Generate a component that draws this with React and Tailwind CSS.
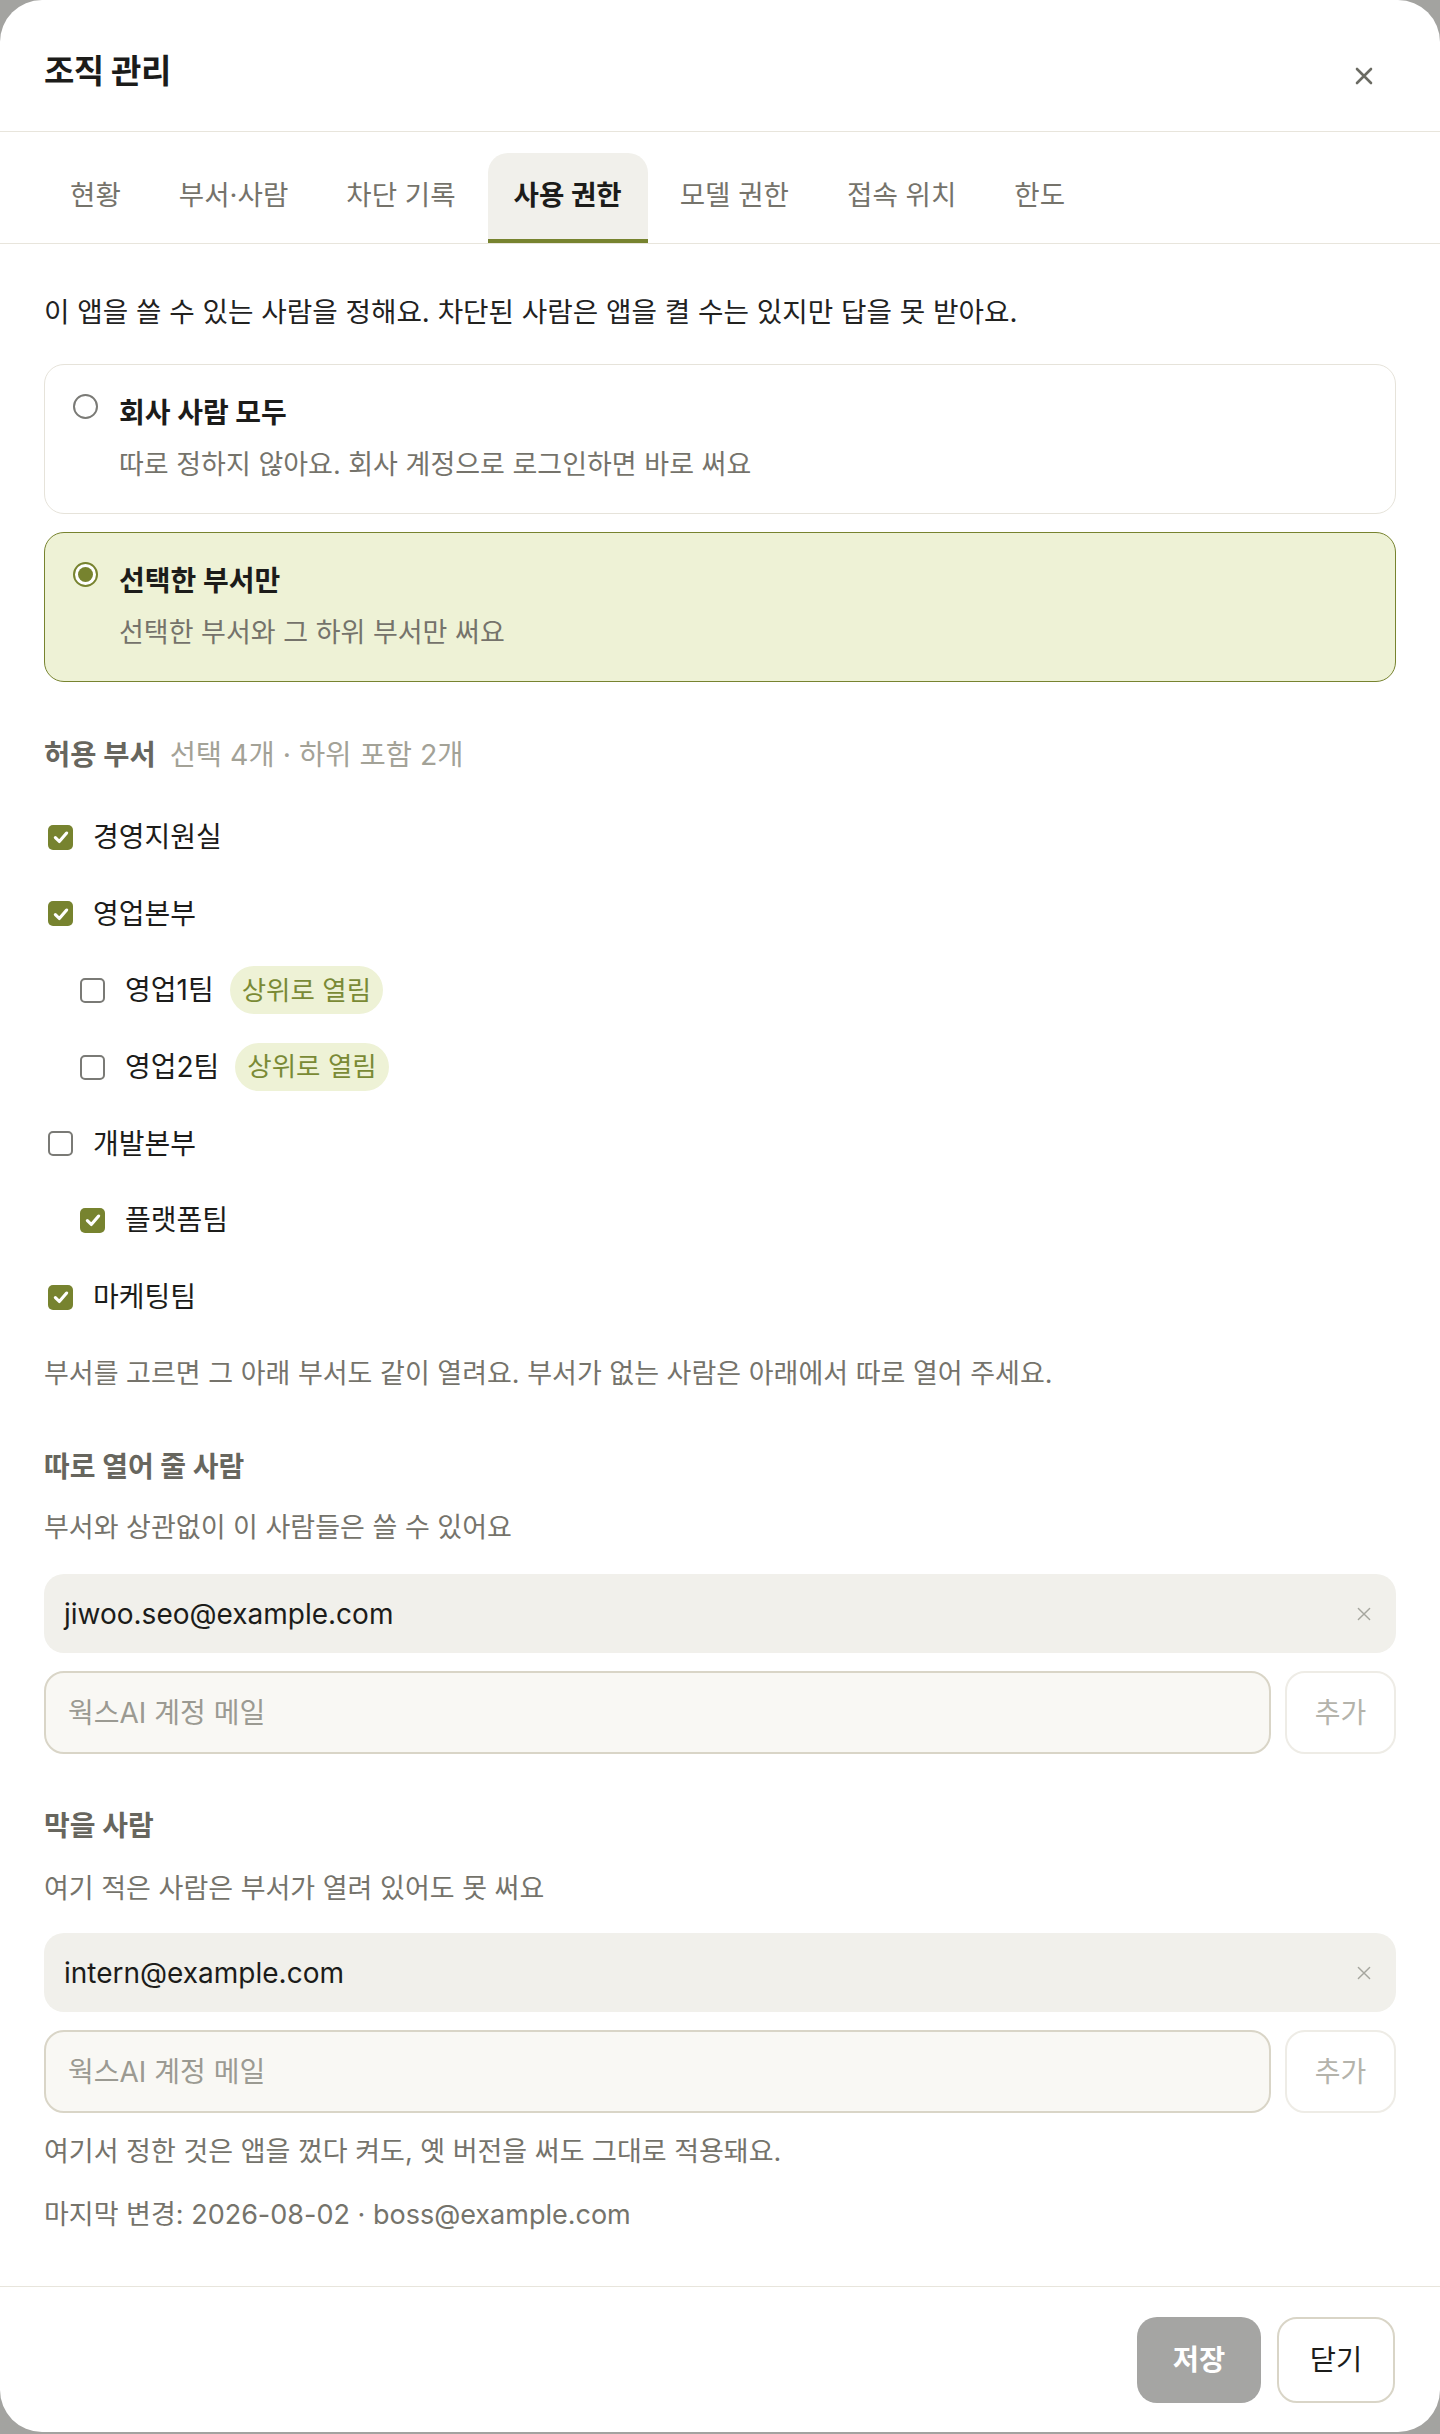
import React from 'react'

const depts = [
  { name: '경영지원실', checked: true, depth: 0 },
  { name: '영업본부', checked: true, depth: 0 },
  { name: '영업1팀', checked: false, depth: 1, inherited: true },
  { name: '영업2팀', checked: false, depth: 1, inherited: true },
  { name: '개발본부', checked: false, depth: 0 },
  { name: '플랫폼팀', checked: true, depth: 1 },
  { name: '마케팅팀', checked: true, depth: 0 },
]

const tabs = ['현황', '부서·사람', '차단 기록', '사용 권한', '모델 권한', '접속 위치', '한도']

function XIcon({ size = 20, stroke = 2.5, color = '#6b6b63' }) {
  return (
    <svg width={size} height={size} viewBox="0 0 20 20" fill="none" className="block">
      <path d="M3 3L17 17M17 3L3 17" stroke={color} strokeWidth={stroke} strokeLinecap="round" />
    </svg>
  )
}

function Checkbox({ checked }) {
  if (checked) {
    return (
      <span className="w-[25px] h-[25px] rounded-[5px] bg-[#77832f] flex items-center justify-center shrink-0">
        <svg width="18" height="18" viewBox="0 0 16 16" fill="none">
          <path d="M3 8.5L6.5 12L13 4.5" stroke="white" strokeWidth="2.8" strokeLinecap="round" strokeLinejoin="round" />
        </svg>
      </span>
    )
  }
  return <span className="block w-[25px] h-[25px] rounded-[5px] border-[2px] border-[#7a7a76] bg-white shrink-0" />
}

function Radio({ selected }) {
  if (selected) {
    return (
      <span className="w-[25px] h-[25px] rounded-full border-[2px] border-[#77832f] bg-white flex items-center justify-center shrink-0">
        <span className="block w-[15px] h-[15px] rounded-full bg-[#77832f]" />
      </span>
    )
  }
  return <span className="block w-[25px] h-[25px] rounded-full border-[2px] border-[#7a7a76] bg-white shrink-0" />
}

function OptionCard({ selected, title, desc }) {
  return (
    <div
      className={
        'flex items-start gap-[21px] rounded-[20px] px-[28px] pt-[30px] pb-[32px] border-[1.5px] ' +
        (selected ? 'bg-[#eef2d6] border-[#77832f]' : 'bg-white border-[#e6e3da]')
      }
    >
      <div className="mt-[-1px]">
        <Radio selected={selected} />
      </div>
      <div className="flex flex-col">
        <div className="text-[28px] leading-[36px] font-bold text-[#1c1c1a]">{title}</div>
        <div className="mt-[17px] text-[27px] leading-[33px] text-[#75736b]">{desc}</div>
      </div>
    </div>
  )
}

function EmailChip({ email }) {
  return (
    <div className="h-[79px] rounded-[20px] bg-[#f1f0eb] flex items-center justify-between pl-[20px] pr-[24px]">
      <span className="text-[28px] text-[#1c1c1a]">{email}</span>
      <XIcon size={16} stroke={1.8} color="#a6a69e" />
    </div>
  )
}

function AddRow() {
  return (
    <div className="flex gap-[14px] mt-[18px]">
      <div className="flex-1 h-[83px] rounded-[20px] bg-[#f9f8f4] border-[2px] border-[#d9d5c7] flex items-center px-[22px]">
        <span className="text-[28px] text-[#9b9a92]">웍스AI 계정 메일</span>
      </div>
      <button className="w-[111px] h-[83px] rounded-[20px] bg-white border-[2px] border-[#eeece6] text-[28px] text-[#b4b3ab]">
        추가
      </button>
    </div>
  )
}

export default function App() {
  return (
    <div
      className="min-h-screen bg-[#a3a3a0]"
      style={{ fontFamily: 'Inter, "Noto Sans CJK KR", sans-serif' }}
    >
      <div className="bg-white rounded-[42px] h-[2432px] flex flex-col overflow-hidden">
        {/* header */}
        <div className="flex items-center justify-between pl-[44px] pr-[66px] pt-[50px] pb-[38px] border-b-[1.5px] border-[#e8e5dc]">
          <h1 className="text-[33px] leading-[43px] font-bold text-[#1c1c1a] tracking-[-0.5px]">조직 관리</h1>
          <div className="mt-[8px]">
            <XIcon size={20} stroke={2.6} />
          </div>
        </div>

        {/* tabs */}
        <div className="flex gap-[6px] px-[44px] pt-[21px] border-b-[1.5px] border-[#e8e5dc]">
          {tabs.map((t) => {
            const active = t === '사용 권한'
            return (
              <div
                key={t}
                className={
                  'h-[90px] px-[26px] flex items-center text-[27.6px] border-b-[4.5px] rounded-t-[20px] ' +
                  (active
                    ? 'bg-[#f1f0eb] border-[#77832f] font-bold text-[#1c1c1a]'
                    : 'border-transparent text-[#75736b]')
                }
              >
                {t}
              </div>
            )
          })}
        </div>

        {/* body */}
        <div className="flex-1 px-[44px] pt-[52px]">
          <p className="text-[27.7px] leading-[33px] text-[#22221f]">
            이 앱을 쓸 수 있는 사람을 정해요. 차단된 사람은 앱을 켤 수는 있지만 답을 못 받아요.
          </p>

          <div className="mt-[35px] flex flex-col gap-[18px]">
            <OptionCard title="회사 사람 모두" desc="따로 정하지 않아요. 회사 계정으로 로그인하면 바로 써요" />
            <OptionCard selected title="선택한 부서만" desc="선택한 부서와 그 하위 부서만 써요" />
          </div>

          <div className="mt-[55px] text-[28.5px] leading-[36px]">
            <span className="font-bold text-[#67665e]">허용 부서</span>
            <span className="ml-[14px] text-[#a3a297]">선택 4개 · 하위 포함 2개</span>
          </div>

          <div className="mt-[46px] flex flex-col gap-[40.7px]">
            {depts.map((d) => (
              <div
                key={d.name}
                className={'h-[36px] flex items-center gap-[20px] ' + (d.depth ? 'pl-[36px]' : 'pl-[4px]')}
              >
                <Checkbox checked={d.checked} />
                <span className="text-[28px] text-[#1c1c1a]">{d.name}</span>
                {d.inherited && (
                  <span className="-ml-[4px] h-[48px] flex items-center px-[12px] rounded-full bg-[#eef2d6] text-[26.5px] text-[#7a8a35]">
                    상위로 열림
                  </span>
                )}
              </div>
            ))}
          </div>

          <p className="mt-[42px] text-[27px] leading-[33px] text-[#75736b]">
            부서를 고르면 그 아래 부서도 같이 열려요. 부서가 없는 사람은 아래에서 따로 열어 주세요.
          </p>

          <h2 className="mt-[59px] text-[28px] leading-[36px] font-bold text-[#67665e]">따로 열어 줄 사람</h2>
          <p className="mt-[26px] text-[27px] leading-[33px] text-[#75736b]">부서와 상관없이 이 사람들은 쓸 수 있어요</p>
          <div className="mt-[30px]">
            <EmailChip email="jiwoo.seo@example.com" />
            <AddRow />
          </div>

          <h2 className="mt-[54px] text-[28px] leading-[36px] font-bold text-[#67665e]">막을 사람</h2>
          <p className="mt-[28px] text-[27px] leading-[33px] text-[#75736b]">여기 적은 사람은 부서가 열려 있어도 못 써요</p>
          <div className="mt-[28px]">
            <EmailChip email="intern@example.com" />
            <AddRow />
          </div>

          <p className="mt-[22px] text-[27px] leading-[33px] text-[#75736b]">
            여기서 정한 것은 앱을 껐다 켜도, 옛 버전을 써도 그대로 적용돼요.
          </p>
          <p className="mt-[30px] text-[27px] leading-[33px] text-[#75736b]">
            마지막 변경: 2026-08-02 · boss@example.com
          </p>
        </div>

        {/* footer */}
        <div className="flex justify-end gap-[16px] px-[45px] pt-[30px] pb-[29px] border-t-[1.5px] border-[#e8e5dc]">
          <button className="w-[124px] h-[86px] rounded-[20px] bg-[#a5a5a3] text-white text-[28.5px] font-semibold">
            저장
          </button>
          <button className="w-[118px] h-[86px] rounded-[20px] bg-white border-[2px] border-[#d9d5c7] text-[28.5px] text-[#1c1c1a]">
            닫기
          </button>
        </div>
      </div>
    </div>
  )
}
